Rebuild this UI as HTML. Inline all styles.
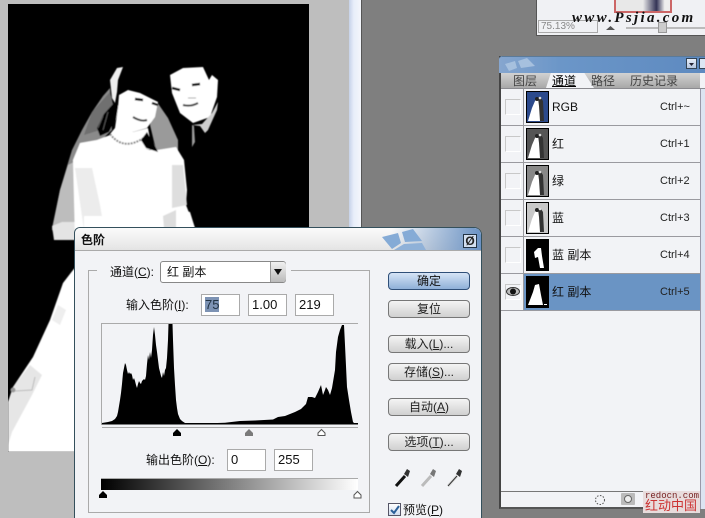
<!DOCTYPE html>
<html><head><meta charset="utf-8"><style>
html,body{margin:0;padding:0;width:705px;height:518px;overflow:hidden;background:#7f7f7f}
body{position:relative;font:12px/14px "Liberation Sans","Noto Sans CJK SC",sans-serif;color:#111}
#w{position:absolute;left:0;top:0;width:705px;height:518px;overflow:hidden}
.a{position:absolute}
.btn{position:absolute;left:388px;width:80px;height:16px;border:1px solid #777;border-radius:4px;background:linear-gradient(#f4f4f4,#d0d0d0);text-align:center;line-height:16px;color:#222}
.inp{position:absolute;background:#fff;border:1px solid #aaa;box-sizing:border-box;height:22px;line-height:20px;padding-left:3px;font-size:13px}
.row{position:absolute;left:501px;width:199px;height:37px;border-bottom:1px solid #9a9a9f;box-sizing:border-box}
.chk{position:absolute;left:4px;top:10px;width:14px;height:14px;border:1px solid #c8c8c8;border-right-color:#fff;border-bottom-color:#fff}
.vl{position:absolute;left:22px;top:0;width:1px;height:37px;background:#9a9a9f}
.th{position:absolute;left:25px;top:2px;width:21px;height:30px;border:1px solid #000;overflow:hidden}
.nm{position:absolute;left:51px;top:11px;font-size:12px}
.ct{position:absolute;left:159px;top:11px;font-size:11px;font-family:"Liberation Sans",sans-serif;color:#222}
u{text-decoration:underline}
</style></head><body><div id="w">
<svg width="0" height="0" style="position:absolute"><defs>
<symbol id="fig" viewBox="0 0 21 30"><path d="M1 29 L5 16 L8 9 L10 6 L13 8 L13 14 L15 22 L16 29Z" fill="#fff"/><path d="M11 6h3l2 3 1 20h-4l-1-15Z" fill="#333"/><circle cx="10" cy="7" r="2" fill="#222"/><circle cx="13" cy="6" r="1.300" fill="#ddd"/></symbol>
<filter id="s"><feGaussianBlur stdDeviation=".45"/></filter>
</defs></svg>

<div class="a" style="left:0;top:0;width:349px;height:518px;background:#bebebe"></div>
<div class="a" style="left:349px;top:0;width:12px;height:240px;background:linear-gradient(90deg,#c6d2e8,#e8eefa 40%,#f4f6fb);border-right:1px solid #fff"></div>
<div class="a" style="left:361px;top:0;width:1px;height:240px;background:#555"></div>

<svg class="a" style="left:8px;top:4px" width="301" height="448" viewBox="8 4 301 448">
<rect x="8" y="4" width="301" height="448" fill="#000"/>
<g filter="url(#s)">
<path d="M110 88 L103 96 L92 112 L82 130 L72 150 L68 163 L60 190 L52 228 L55 240 L76 240 L80 160 L112 130Z" fill="#8a8a8a"/>
<path d="M68 165 L78 160 L78 235 L52 230 L60 190Z" fill="#bdbdbd"/>
<path d="M52 226 L62 222 L76 222 L76 240 L54 240Z" fill="#e4e4e4"/>
<path d="M92 112 L110 92 L114 108 L100 130 L84 135Z" fill="#6f6f6f"/>
<path d="M157 102 L168 118 L178 140 L178 150 L156 150 L150 125Z" fill="#9a9a9a"/>
<path d="M97 128 L100 136 L109 132 L116 118 L119 106 L113 104 L104 114Z" fill="#000"/>
<path d="M103 116 L98 128M108 112 L103 130" stroke="#555" stroke-width="1"/>
<path d="M73 160 L80 143 L97 140 L110 135 L130 145 L150 150 L157 150 L176 147 L184 160 L187 190 L186 205 L195 228 L195 240 L75 240Z" fill="#fff"/>
<path d="M75 168 L92 168 L100 205 L104 228 L84 230Z" fill="#ececec"/>
<path d="M172 165 L183 165 L187 205 L172 208Z" fill="#dedede"/>
<path d="M118 107 L133 132 L148 128 L152 150 L112 144 L110 134 L115 128Z" fill="#fff"/>
<path d="M110 134 Q124 152 145 137" fill="none" stroke="#8a8a8a" stroke-width="2" stroke-dasharray="2 1"/>
<path d="M147 132 L156 148 L158 152 L146 148 L141 140Z" fill="#000"/>
<path d="M110 80 L117 68 L123 67 L118 80 L117 92 L115 103 L112 98Z" fill="#efefef"/>
<path d="M119 95 L128 90 L140 93 L158 102 L155 117 L147 128 L133 132 L123 123 L118 107Z" fill="#fff"/>
<path d="M135 99 L143 100M152 103 L158 105" stroke="#111" stroke-width="2.500"/>
<path d="M133 117 Q141 122 147 120" stroke="#444" stroke-width="2" fill="none"/>
<path d="M170 75 L183 68 L203 67 L209 80 L212 75 L218 80 L217 97 L210 117 L193 123 L180 113 L172 93Z" fill="#fff"/>
<path d="M172 88 L180 90M192 85 L200 84" stroke="#111" stroke-width="2.500"/>
<path d="M183 105 Q191 107 198 103" stroke="#444" stroke-width="2" fill="none"/>
<path d="M188 98h8" stroke="#aaa" stroke-width="1"/>
<path d="M192 125 L202 124 L212 113 L218 102 L217 110 L208 130 L205 133 L200 126Z" fill="#cfcfcf"/>
<path d="M192 125 L192 147 L195 142 L194 126Z" fill="#999"/>
<path d="M166 214 L178 209 L190 212 L195 228 L164 230Z" fill="#fff"/>
<path d="M163 216 L176 210 L176 228 L164 228Z" fill="#ddd"/>
<path d="M84 216 L104 216 L110 228 L84 228Z" fill="#fff"/>
<path d="M80 262 L73 270 L63 283 L50 320 L33 357 L13 387 L8 402 L8 452 L85 452 L85 262Z" fill="#fff"/>
<path d="M13 387 L30 365 L42 375 L32 395 L12 432 L8 445 L8 404Z" fill="#e6e6e6"/>
<path d="M58 305 L66 310 L60 325 L52 320Z" fill="#eee"/>
<circle cx="13" cy="390" r="2.500" fill="#999"/>
<path d="M15 391 L32 390 L35 377" stroke="#bbb" fill="none"/>
</g>
</svg>

<div class="a" style="left:536px;top:0;width:169px;height:36px;background:#f0f1f4;border-left:1px solid #555;border-bottom:1px solid #555;box-sizing:border-box"></div>
<div class="a" style="left:614px;top:0;width:58px;height:13px;background:linear-gradient(90deg,#e8e8e8 50%,#335 75%,#eee 90%);border:2px solid #c66;border-top:0;box-sizing:border-box"></div>
<div class="a" style="left:538px;top:20px;width:60px;height:13px;border:1px solid #aaa;box-sizing:border-box;font-size:10px;line-height:12px;color:#888;padding-left:2px">75.13%</div>
<div class="a" style="left:606px;top:26px;width:9px;height:4px;background:#555;clip-path:polygon(50% 0,100% 100%,0 100%)"></div>
<div class="a" style="left:626px;top:27px;width:79px;height:2px;background:#bbb"></div>
<div class="a" style="left:658px;top:22px;width:9px;height:11px;background:#ccc;border:1px solid #999;box-sizing:border-box"></div>
<div class="a" style="left:572px;top:10px;font:italic bold 15px/16px 'Liberation Serif',serif;letter-spacing:2.300px;color:#111;white-space:nowrap">www.Psjia.com</div>

<div class="a" style="left:499px;top:56px;width:206px;height:453px;background:#f2f3f6;border-left:2px solid #444;border-bottom:2px solid #555;box-sizing:border-box"></div>
<div class="a" style="left:499px;top:56px;width:206px;height:17px;background:linear-gradient(90deg,#86a6cf,#6b96c8 30%,#5e8ac0);border-top:1px solid #5a7a9a;box-sizing:border-box;border-radius:3px 0 0 0"></div>
<svg class="a" style="left:503px;top:58px" width="40" height="14"><path d="M2 6 L12 3 L14 10 L6 13Z M15 3 L24 0 L32 8 L18 10Z" fill="#a6c0de"/></svg>
<div class="a" style="left:686px;top:58px;width:11px;height:11px;background:linear-gradient(#e8eef8,#b6c8e0);border:1px solid #345;box-sizing:border-box"></div>
<div class="a" style="left:689px;top:63px;width:5px;height:3px;background:#223;clip-path:polygon(0 0,100% 0,50% 100%)"></div>
<div class="a" style="left:699px;top:58px;width:6px;height:11px;background:#dce6f4;border:1px solid #345;box-sizing:border-box;border-right:0"></div>
<div class="a" style="left:501px;top:73px;width:204px;height:15px;background:linear-gradient(#d2d2d2,#a8a8a8)"></div>
<div class="a" style="left:546px;top:73px;width:48px;height:15px;background:#f2f3f6;clip-path:polygon(10% 0,80% 0,100% 100%,0 100%)"></div>
<div class="a" style="left:700px;top:73px;width:5px;height:15px;background:#f2f3f6"></div>
<div class="a" style="left:501px;top:88px;width:204px;height:1px;background:#8b8b90"></div>
<div class="a" style="left:513px;top:74px;color:#444;white-space:nowrap">图层</div>
<div class="a" style="left:552px;top:74px;color:#000;white-space:nowrap"><u>通道</u></div>
<div class="a" style="left:591px;top:74px;color:#444;white-space:nowrap">路径</div>
<div class="a" style="left:630px;top:74px;color:#444;white-space:nowrap">历史记录</div>
<div class="a" style="left:700px;top:89px;width:5px;height:420px;background:#dce4f2;border-left:1px solid #99a;box-sizing:border-box"></div>

<div class="row" style="top:89px"><div class="chk"></div><div class="vl"></div><div class="th" style="background:#2c4a8c"><svg width="21" height="30"><use href="#fig"/></svg></div><div class="nm">RGB</div><div class="ct">Ctrl+~</div></div>
<div class="row" style="top:126px"><div class="chk"></div><div class="vl"></div><div class="th" style="background:#555"><svg width="21" height="30"><use href="#fig"/></svg></div><div class="nm">红</div><div class="ct">Ctrl+1</div></div>
<div class="row" style="top:163px"><div class="chk"></div><div class="vl"></div><div class="th" style="background:#888"><svg width="21" height="30"><use href="#fig"/></svg></div><div class="nm">绿</div><div class="ct">Ctrl+2</div></div>
<div class="row" style="top:200px"><div class="chk"></div><div class="vl"></div><div class="th" style="background:#c8c8c8"><svg width="21" height="30"><use href="#fig"/></svg></div><div class="nm">蓝</div><div class="ct">Ctrl+3</div></div>
<div class="row" style="top:237px"><div class="chk"></div><div class="vl"></div><div class="th" style="background:#000"><svg width="21" height="30"><path d="M11 8h3l1 8 2 12h-4l-2-11-3 1-1-6Z" fill="#fff"/></svg></div><div class="nm">蓝 副本</div><div class="ct">Ctrl+4</div></div>
<div class="row" style="top:274px"><div class="a" style="left:23px;top:0;width:176px;height:36px;background:#6a94c4"></div><div class="chk"></div>
<svg class="a" style="left:5px;top:12px" width="14" height="11"><ellipse cx="7" cy="5.500" rx="6.500" ry="4" fill="#bbb" stroke="#333"/><circle cx="7" cy="5.500" r="3" fill="#111"/></svg>
<div class="vl"></div><div class="th" style="background:#000"><svg width="21" height="30"><path d="M1 28 L6 15 L8 8 L12 7 L14 18 L16 28Z" fill="#fff"/><rect x="17" y="27" width="3" height="1" fill="#fff"/></svg></div><div class="nm">红 副本</div><div class="ct">Ctrl+5</div></div>

<div class="a" style="left:501px;top:491px;width:199px;height:1px;background:#777"></div>
<svg class="a" style="left:593px;top:493px" width="14" height="14"><circle cx="7" cy="7" r="4.500" fill="none" stroke="#555" stroke-dasharray="1.500 1.500"/></svg>
<div class="a" style="left:621px;top:493px;width:14px;height:12px;background:#bbb;border-radius:1px"></div>
<div class="a" style="left:624px;top:495px;width:8px;height:8px;border-radius:50%;background:#eee;border:1px solid #666;box-sizing:border-box"></div>
<div class="a" style="left:643px;top:491px;width:57px;height:22px;background:#e8dcdc"></div>
<div class="a" style="left:645px;top:491px;font:9px/10px 'Liberation Mono',monospace;color:#722;white-space:nowrap">redocn.com</div>
<div class="a" style="left:645px;top:499px;font-size:13px;line-height:14px;color:#c33;white-space:nowrap">红动中国</div>

<div class="a" style="left:74px;top:227px;width:408px;height:291px;background:#f2f3f6;border:1px solid #34505c;border-bottom:0;box-sizing:border-box;border-radius:6px 8px 0 0"></div>
<div class="a" style="left:75px;top:228px;width:406px;height:22px;background:linear-gradient(90deg,rgba(255,255,255,0) 78%,#6a92c4 100%),linear-gradient(#fbfbfb,#e4e4e4);border-bottom:1px solid #aaa;border-radius:5px 7px 0 0;box-sizing:border-box;height:23px"></div>
<svg class="a" style="left:382px;top:229px" width="48" height="21"><path d="M0 8 L16 4 L19 14 L10 20Z M20 3 L31 0 L40 12 L23 13Z" fill="#85abd6"/><path d="M12 21 L22 15 L40 14 L44 21Z" fill="#8fb1d8"/></svg>
<div class="a" style="left:463px;top:234px;width:14px;height:14px;background:#d4e0f0;border:1px solid #234;box-sizing:border-box;text-align:center;font:bold 12px/12px 'Liberation Sans',sans-serif;color:#222">Ø</div>
<div class="a" style="left:81px;top:233px;font-weight:bold;color:#111">色阶</div>

<div class="a" style="left:88px;top:270px;width:282px;height:243px;border:1px solid #aaa;box-sizing:border-box"></div>
<div class="a" style="left:97px;top:268px;width:194px;height:5px;background:#f2f3f6"></div>
<div class="a" style="left:110px;top:265px;white-space:nowrap">通道(<u>C</u>):</div>
<div class="a" style="left:160px;top:261px;width:126px;height:22px;background:#fff;border:1px solid #888;box-sizing:border-box;border-radius:3px;padding-left:6px;line-height:20px">红 副本</div>
<div class="a" style="left:270px;top:262px;width:15px;height:20px;background:linear-gradient(#f0f0f0,#bbb);border-left:1px solid #999;border-radius:0 3px 3px 0"></div>
<div class="a" style="left:274px;top:269px;width:8px;height:6px;background:#111;clip-path:polygon(0 0,100% 0,50% 100%)"></div>

<div class="a" style="left:126px;top:298px;white-space:nowrap">输入色阶(<u>I</u>):</div>
<div class="inp" style="left:201px;top:294px;width:39px"><span style="background:#7d93b4;color:#234">75</span></div>
<div class="inp" style="left:248px;top:294px;width:39px">1.00</div>
<div class="inp" style="left:295px;top:294px;width:39px">219</div>

<svg class="a" style="left:100px;top:322px" width="260" height="116" viewBox="100 322 260 116">
<path d="M101.500 425V323.500H358" fill="none" stroke="#aaa"/>
<path fill="#000" d="M102 424 L102 423 L108 422 L112 421 L115 419 L117 416 L118 412 L119 406 L120 400 L121 393 L122 384 L123 373 L124 368 L125 363 L126 365 L127 370 L128 374 L129 372 L130 374 L131 373 L132 375 L133 380 L134 378 L135 381 L136 385 L137 388 L138 384 L139 381 L140 383 L141 384 L142 381 L144 379 L145 380 L146 376 L147 364 L148 355 L149 360 L150 352 L151 358 L152 350 L153 335 L154 327 L155 335 L156 345 L157 352 L158 360 L159 368 L160 372 L161 376 L162 378 L163 372 L164 376 L165 370 L166 368 L167 358 L168 340 L168.500 324 L172.500 324 L173 340 L174 368 L175 385 L176 400 L177 408 L178 414 L180 419 L182 421 L185 423 L190 423.500 L210 423.300 L225 422.800 L240 421 L255 420.500 L273 419.500 L278 417 L285 416 L290 414 L295 412 L301 409 L303 407 L306 404 L308 397 L312 397 L315 398 L318 392 L321 385 L323 395 L325 390 L326 387 L328 390 L330 395 L332 388 L335 370 L336 352 L338 337 L340 330 L342 325 L344 325 L345 345 L346 366 L347 387 L349 400 L351 412 L353 422 L355 424Z"/>
<rect x="102" y="423" width="256" height="1.500" fill="#000"/>
<path d="M102 427.500H358" stroke="#aaa"/>
<path d="M177 429 L181 433 V436 H173 V433Z" fill="#000"/>
<path d="M249 429 L253 433 V436 H245 V433Z" fill="#7a7a7a"/>
<path d="M321.500 429.500 L325 433 V435.500 H318 V433Z" fill="#fff" stroke="#555"/>
</svg>

<div class="a" style="left:146px;top:453px;white-space:nowrap">输出色阶(<u>O</u>):</div>
<div class="inp" style="left:227px;top:449px;width:39px">0</div>
<div class="inp" style="left:274px;top:449px;width:39px">255</div>
<div class="a" style="left:101px;top:478px;width:257px;height:12px;background:linear-gradient(90deg,#000,#fff);border-top:1px solid #aaa;box-sizing:border-box"></div>
<svg class="a" style="left:97px;top:490px" width="268" height="10"><path d="M6 1 L10 5 V8 H2 V5Z" fill="#000"/><path d="M260.500 1.500 L264 5 V8 H257 V5Z" fill="#fff" stroke="#555"/></svg>

<div class="btn" style="top:272px;background:linear-gradient(#d6e4f6,#8fb0d8);border-color:#2f4f78;color:#111">确定</div>
<div class="btn" style="top:300px">复位</div>
<div class="btn" style="top:335px">载入(<u>L</u>)...</div>
<div class="btn" style="top:363px">存储(<u>S</u>)...</div>
<div class="btn" style="top:398px">自动(<u>A</u>)</div>
<div class="btn" style="top:433px">选项(<u>T</u>)...</div>

<svg class="a" style="left:394px;top:468px" width="70" height="20">
<path d="M2 18 L11 8" stroke="#111" stroke-width="3"/><path d="M10 6 L13 1 L16 3 L14 9Z" fill="#333"/>
<path d="M28 18 L37 8" stroke="#bbb" stroke-width="3"/><path d="M36 6 L39 1 L42 3 L40 9Z" fill="#777"/>
<path d="M54 18 L63 8" stroke="#ddd" stroke-width="3"/><path d="M54 18 L63 8" stroke="#333" stroke-width="1"/><path d="M62 6 L65 1 L68 3 L66 9Z" fill="#333"/>
</svg>
<div class="a" style="left:388px;top:503px;width:13px;height:13px;background:linear-gradient(#fff,#cfdcee);border:1px solid #556;box-sizing:border-box"></div>
<svg class="a" style="left:388px;top:503px" width="14" height="14"><path d="M3 7 L6 10 L11 3" stroke="#2b5f98" stroke-width="2" fill="none"/></svg>
<div class="a" style="left:403px;top:503px;white-space:nowrap">预览(<u>P</u>)</div>
</div></body></html>
